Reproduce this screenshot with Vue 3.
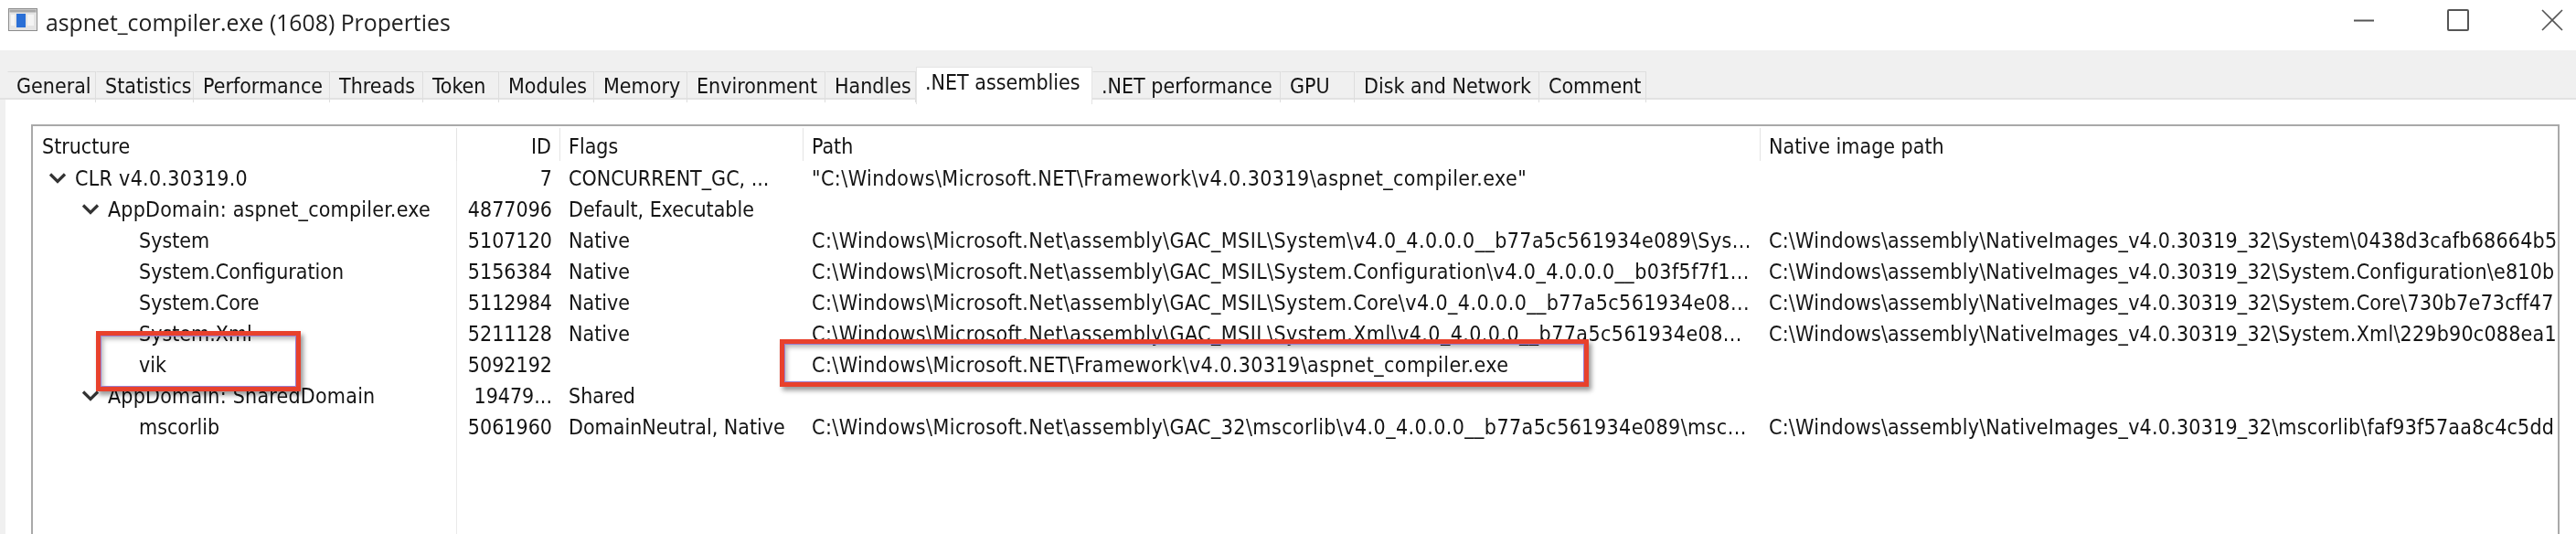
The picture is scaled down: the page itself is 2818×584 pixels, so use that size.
<template>
  <div class="ventana">
    <header class="titulo">
      <svg class="icono" width="32" height="25" viewBox="0 0 32 25">
        <rect x="0.5" y="0.5" width="31" height="24" fill="#e4e4e4" stroke="#8c8c8c" />
        <rect x="1.5" y="1.5" width="29" height="3" fill="#a8a8a8" />
        <rect x="9" y="6" width="10" height="15" fill="#2a6fd6" />
        <rect x="3" y="7" width="4" height="12" fill="#f4f4f4" />
        <rect x="21" y="7" width="7" height="12" fill="#f4f4f4" />
      </svg>
      <span class="titulo-texto">aspnet_compiler.exe (1608) Properties</span>
      <div class="controles">
        <svg width="24" height="24" viewBox="0 0 24 24">
          <path d="M1 12.5H23" stroke="#555" stroke-width="2" />
        </svg>
        <svg width="24" height="24" viewBox="0 0 24 24">
          <rect x="1" y="1" width="22" height="22" rx="1" fill="none" stroke="#555" stroke-width="2" />
        </svg>
        <svg width="24" height="24" viewBox="0 0 24 24">
          <path d="M1 1L23 23M23 1L1 23" stroke="#555" stroke-width="1.6" fill="none" />
        </svg>
      </div>
    </header>

    <nav class="pestanas">
      <div
        v-for="tab in pestanas"
        :key="tab"
        class="pestana"
        :class="{ activa: tab === '.NET assemblies' }"
      >
        {{ tab }}
      </div>
    </nav>

    <main class="cuerpo">
      <section class="panel">
        <div class="fila cabecera">
          <div class="celda">Structure</div>
          <div class="celda id">ID</div>
          <div class="celda">Flags</div>
          <div class="celda">Path</div>
          <div class="celda">Native image path</div>
        </div>
        <div v-for="fila in filas" :key="fila.nombre" class="fila">
          <div class="celda arbol" :class="'nivel' + fila.nivel">
            <svg v-if="fila.nivel < 2" class="flecha" width="20" height="12" viewBox="0 0 20 12">
              <path d="M2 1.5L10 9.5L18 1.5" fill="none" stroke="#333" stroke-width="3.2" />
            </svg>
            {{ fila.nombre }}
          </div>
          <div class="celda id">{{ fila.id }}</div>
          <div class="celda">{{ fila.flags }}</div>
          <div class="celda ruta">{{ fila.path }}</div>
          <div class="celda nativo">{{ fila.nativo }}</div>
        </div>
        <div class="separador"></div>
      </section>
      <div class="marca marca-vik"></div>
      <div class="marca marca-path"></div>
    </main>
  </div>
</template>

<script setup>
const pestanas = [
  "General",
  "Statistics",
  "Performance",
  "Threads",
  "Token",
  "Modules",
  "Memory",
  "Environment",
  "Handles",
  ".NET assemblies",
  ".NET performance",
  "GPU",
  "Disk and Network",
  "Comment",
];

const gac = "C:\\Windows\\Microsoft.Net\\assembly\\";
const imagenes = "C:\\Windows\\assembly\\NativeImages_v4.0.30319_32\\";
const compilador = "C:\\Windows\\Microsoft.NET\\Framework\\v4.0.30319\\aspnet_compiler.exe";

const filas = [
  { nivel: 0, nombre: "CLR v4.0.30319.0", id: "7", flags: "CONCURRENT_GC, ...", path: `"${compilador}"`, nativo: "" },
  { nivel: 1, nombre: "AppDomain: aspnet_compiler.exe", id: "4877096", flags: "Default, Executable", path: "", nativo: "" },
  { nivel: 2, nombre: "System", id: "5107120", flags: "Native", path: gac + "GAC_MSIL\\System\\v4.0_4.0.0.0__b77a5c561934e089\\Sys...", nativo: imagenes + "System\\0438d3cafb68664b5" },
  { nivel: 2, nombre: "System.Configuration", id: "5156384", flags: "Native", path: gac + "GAC_MSIL\\System.Configuration\\v4.0_4.0.0.0__b03f5f7f1...", nativo: imagenes + "System.Configuration\\e810b" },
  { nivel: 2, nombre: "System.Core", id: "5112984", flags: "Native", path: gac + "GAC_MSIL\\System.Core\\v4.0_4.0.0.0__b77a5c561934e08...", nativo: imagenes + "System.Core\\730b7e73cff47" },
  { nivel: 2, nombre: "System.Xml", id: "5211128", flags: "Native", path: gac + "GAC_MSIL\\System.Xml\\v4.0_4.0.0.0__b77a5c561934e08...", nativo: imagenes + "System.Xml\\229b90c088ea1" },
  { nivel: 2, nombre: "vik", id: "5092192", flags: "", path: compilador, nativo: "" },
  { nivel: 1, nombre: "AppDomain: SharedDomain", id: "19479...", flags: "Shared", path: "", nativo: "" },
  { nivel: 2, nombre: "mscorlib", id: "5061960", flags: "DomainNeutral, Native", path: gac + "GAC_32\\mscorlib\\v4.0_4.0.0.0__b77a5c561934e089\\msc...", nativo: imagenes + "mscorlib\\faf93f57aa8c4c5dd" },
];
</script>

<style scoped>
.ventana {
  width: 2818px;
  height: 584px;
  overflow: hidden;
  background: #fff;
  color: #141414;
  font-family: "DejaVu Sans", "Noto Sans", sans-serif;
  font-stretch: condensed;
  font-size: 23px;
  filter: blur(0.5px);
}

.titulo {
  height: 55px;
  display: flex;
  align-items: flex-start;
  padding-left: 9px;
}
.icono {
  margin-top: 9px;
}
.titulo-texto {
  margin: 6px 0 0 9px;
  font-family: "Open Sans", sans-serif;
  font-stretch: normal;
  font-size: 24.8px;
  line-height: 36px;
  color: #222;
}
.controles {
  margin-left: auto;
  margin-right: 14px;
  padding-top: 10px;
  display: flex;
  gap: 79px;
}

.pestanas {
  height: 54px;
  box-sizing: border-box;
  background: #f0f0f0;
  border-bottom: 2px solid #e2e2e2;
  padding: 18px 0 0 8px;
  display: grid;
  grid-template-columns: 97px 107px 149px 102px 83px 104px 102px 151px 99px 193px 206px 81px 202px 117px;
  justify-content: start;
  align-items: end;
}
.pestana {
  height: 34px;
  line-height: 30px;
  box-sizing: border-box;
  border: 1px solid #dedede;
  border-bottom: none;
  border-left-color: transparent;
  padding-left: 9px;
  white-space: nowrap;
  overflow: hidden;
}
.pestana.activa {
  height: 41px;
  line-height: 33px;
  margin-bottom: -2px;
  background: #fff;
  border-color: #e4e4e4;
  position: relative;
}

.cuerpo {
  position: relative;
  height: 475px;
  padding: 27px 18px 0 6px;
  border-left: 6px solid #f0f0f0;
  box-sizing: border-box;
}
.panel {
  position: relative;
  margin-left: 22px;
  height: 470px;
  border: 2px solid #a9a9a9;
  border-bottom: none;
  box-sizing: border-box;
  overflow: hidden;
}
.fila {
  display: grid;
  grid-template-columns: 464px 113px 266px 1047px 1fr;
  height: 34px;
  line-height: 34px;
}
.cabecera {
  height: 40px;
}
.cabecera .celda {
  border-right: 1px solid #e4e4e4;
  height: 36px;
  margin-top: 2px;
  line-height: 40px;
}
.cabecera .celda:last-child {
  border-right: none;
}
.celda {
  padding-left: 9px;
  white-space: nowrap;
  overflow: hidden;
  box-sizing: border-box;
}
.celda:first-child {
  padding-left: 10px;
}
.celda.id {
  text-align: right;
  padding: 0 9px 0 0;
}
.ruta {
  letter-spacing: 0.43px;
}
.nativo {
  letter-spacing: 0.22px;
}
.arbol {
  display: flex;
  align-items: center;
}
.nivel0 {
  padding-left: 17px !important;
  letter-spacing: 0.3px;
}
.nivel1 {
  padding-left: 53px !important;
  letter-spacing: 0.22px;
}
.nivel2 {
  padding-left: 116px !important;
}
.flecha {
  margin-right: 9px;
  flex: none;
}
.separador {
  position: absolute;
  left: 463px;
  top: 38px;
  bottom: 0;
  width: 1px;
  background: #eaeaea;
}

.marca {
  position: absolute;
  box-sizing: border-box;
  border: 5px solid #e8412c;
  outline: 1px solid #9a7fd0;
  outline-offset: -6px;
  box-shadow: 3px 4px 5px rgba(0, 0, 0, 0.4), inset 3px 4px 5px rgba(0, 0, 0, 0.28);
}
.marca-vik {
  left: 99px;
  top: 253px;
  width: 224px;
  height: 66px;
}
.marca-path {
  left: 847px;
  top: 262px;
  width: 885px;
  height: 52px;
}
</style>

<style>
body {
  margin: 0;
  background: #fff;
}
</style>
